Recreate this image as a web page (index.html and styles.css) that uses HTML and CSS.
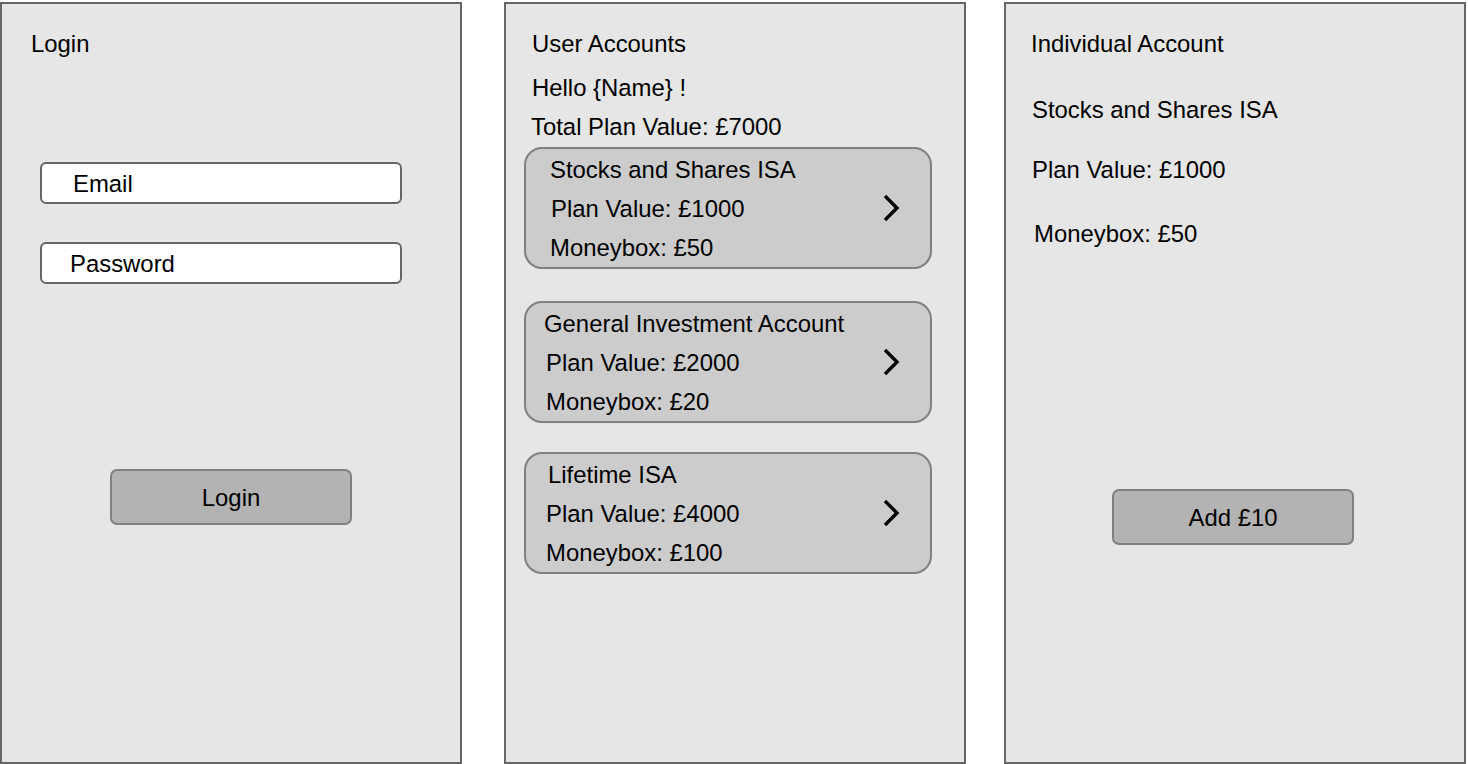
FILE: index.html
```html
<!DOCTYPE html>
<html lang="en">
<head>
<meta charset="utf-8">
<title>Moneybox wireframes</title>
<link rel="stylesheet" href="styles.css">
</head>
<body>
<div class="screens">
  <section class="panel panel-login">
    <div class="title">Login</div>
    <div class="field field-email">Email</div>
    <div class="field field-password">Password</div>
    <div class="btn btn-login">Login</div>
  </section>

  <section class="panel panel-accounts">
    <div class="title">User Accounts</div>
    <div class="hello">Hello {Name} !</div>
    <div class="total">Total Plan Value: £7000</div>

    <div class="card card-1">
      <div class="card-lines">
        <div class="line">Stocks and Shares ISA</div>
        <div class="line line-shift">Plan Value: £1000</div>
        <div class="line">Moneybox: £50</div>
      </div>
      <svg class="chev" viewBox="0 0 20 30" width="20" height="30"><polyline points="3,3 15,15 3,27" fill="none" stroke="#000" stroke-width="3.4"/></svg>
    </div>

    <div class="card card-2">
      <div class="card-lines">
        <div class="line line-title">General Investment Account</div>
        <div class="line">Plan Value: £2000</div>
        <div class="line">Moneybox: £20</div>
      </div>
      <svg class="chev" viewBox="0 0 20 30" width="20" height="30"><polyline points="3,3 15,15 3,27" fill="none" stroke="#000" stroke-width="3.4"/></svg>
    </div>

    <div class="card card-3">
      <div class="card-lines">
        <div class="line line-title">Lifetime ISA</div>
        <div class="line">Plan Value: £4000</div>
        <div class="line">Moneybox: £100</div>
      </div>
      <svg class="chev" viewBox="0 0 20 30" width="20" height="30"><polyline points="3,3 15,15 3,27" fill="none" stroke="#000" stroke-width="3.4"/></svg>
    </div>
  </section>

  <section class="panel panel-detail">
    <div class="title">Individual Account</div>
    <div class="detail detail-name">Stocks and Shares ISA</div>
    <div class="detail detail-value">Plan Value: £1000</div>
    <div class="detail detail-box">Moneybox: £50</div>
    <div class="btn btn-add">Add £10</div>
  </section>
</div>
</body>
</html>
```

FILE: styles.css
```css
* { box-sizing: border-box; }

html, body {
  margin: 0;
  padding: 0;
  background: #ffffff;
}

body {
  font-family: "Liberation Sans", Arial, Helvetica, sans-serif;
  font-size: 23.9px;
  line-height: 28px;
  color: #000;
}

.screens {
  display: flex;
  align-items: flex-start;
  padding-top: 2px;
}

.panel {
  width: 462px;
  height: 762px;
  background: #e6e6e6;
  border: 2px solid #666666;
  display: flex;
  flex-direction: column;
  align-items: flex-start;
  padding-top: 26px;
  flex: none;
}

.panel-accounts { margin-left: 42px; }
.panel-detail { margin-left: 38px; }

.title { height: 28px; white-space: nowrap; }
.panel-login .title { margin-left: 29px; }
.panel-accounts .title { margin-left: 26px; }
.panel-detail .title { margin-left: 25px; }

/* login */
.field {
  width: 362px;
  height: 42px;
  margin-left: 38px;
  background: #ffffff;
  border: 2px solid #666666;
  border-radius: 6px;
  display: flex;
  align-items: center;
  padding-top: 2px;
}
.field-email { margin-top: 104px; padding-left: 31px; }
.field-password { margin-top: 38px; padding-left: 28px; }

.btn {
  width: 242px;
  height: 56px;
  background: #b3b3b3;
  border: 2px solid #808080;
  border-radius: 7px;
  display: flex;
  align-items: center;
  justify-content: center;
  padding-top: 2px;
}
.btn-login { margin-top: 185px; margin-left: 108px; }
.btn-add { margin-top: 241px; margin-left: 106px; }

/* accounts */
.hello { margin-top: 16px; margin-left: 26px; }
.total { margin-top: 11px; margin-left: 25px; }

.card {
  width: 408px;
  height: 122px;
  margin-left: 18px;
  background: #cccccc;
  border: 2px solid #808080;
  border-radius: 18px;
  display: flex;
  align-items: center;
  justify-content: space-between;
  padding-right: 28px;
}
.card-1 { margin-top: 6px; padding-left: 24px; }
.card-2 { margin-top: 32px; padding-left: 20px; }
.card-3 { margin-top: 29px; padding-left: 20px; }

.card-lines {
  display: flex;
  flex-direction: column;
  gap: 11px;
  padding-top: 2px;
}
.line { height: 28px; white-space: nowrap; }
.card-1 .line-shift { margin-left: 1px; }
.card-2 .line-title { margin-left: -2px; }
.card-3 .line-title { margin-left: 2px; }

.chev { display: block; flex: none; }

/* detail */
.detail { white-space: nowrap; }
.detail-name { margin-top: 38px; margin-left: 26px; }
.detail-value { margin-top: 32px; margin-left: 26px; }
.detail-box { margin-top: 36px; margin-left: 28px; }
```
